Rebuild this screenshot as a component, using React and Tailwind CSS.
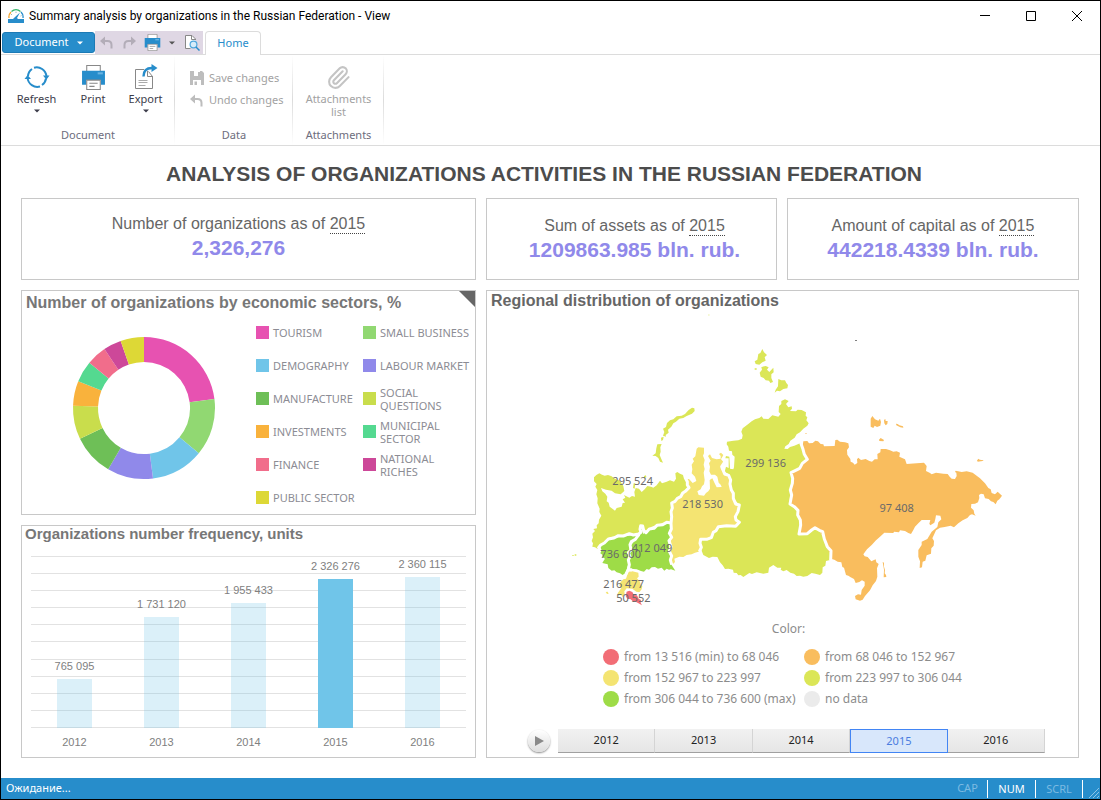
import { useState } from 'react'
import { Paperclip } from 'lucide-react'

const YEARS = ['2012', '2013', '2014', '2015', '2016']

const SECTORS = [
  { name: 'TOURISM', color: '#e752b1', from: 0, to: 82.7 },
  { name: 'SMALL BUSINESS', color: '#91d872', from: 82.7, to: 129.5 },
  { name: 'DEMOGRAPHY', color: '#70c5e9', from: 129.5, to: 172.7 },
  { name: 'LABOUR MARKET', color: '#9089ea', from: 172.7, to: 210.3 },
  { name: 'MANUFACTURE', color: '#6ebf57', from: 210.3, to: 244.4 },
  { name: 'SOCIAL\nQUESTIONS', color: '#c9dd4c', from: 244.4, to: 271.9 },
  { name: 'INVESTMENTS', color: '#f9b23c', from: 271.9, to: 292.2 },
  { name: 'MUNICIPAL\nSECTOR', color: '#54d990', from: 292.2, to: 309.7 },
  { name: 'FINANCE', color: '#f16d8b', from: 309.7, to: 326.1 },
  { name: 'NATIONAL\nRICHES', color: '#cd4899', from: 326.1, to: 340.8 },
  { name: 'PUBLIC SECTOR', color: '#ddd836', from: 340.8, to: 360 },
]

const BARS = [
  { year: '2012', label: '765 095', height: 49 },
  { year: '2013', label: '1 731 120', height: 111 },
  { year: '2014', label: '1 955 433', height: 125 },
  { year: '2015', label: '2 326 276', height: 149 },
  { year: '2016', label: '2 360 115', height: 151 },
]

const RANGES = [
  { label: 'from 13 516 (min) to 68 046', color: '#f26d76' },
  { label: 'from 68 046 to 152 967', color: '#f9bd5e' },
  { label: 'from 152 967 to 223 997', color: '#f4e472' },
  { label: 'from 223 997 to 306 044', color: '#dbe657' },
  { label: 'from 306 044 to 736 600 (max)', color: '#9edc47' },
  { label: 'no data', color: '#ebebeb' },
]

const MAP_LABELS = [
  { text: '295 524', x: 188, y: 466 },
  { text: '218 530', x: 398, y: 535 },
  { text: '299 136', x: 587, y: 412 },
  { text: '97 408', x: 980, y: 546 },
  { text: '736 600', x: 152, y: 684 },
  { text: '412 049', x: 246, y: 667 },
  { text: '216 477', x: 161, y: 774 },
  { text: '50 552', x: 190, y: 817 },
]

function point(angle, r) {
  const a = (angle * Math.PI) / 180
  return `${(72 + r * Math.sin(a)).toFixed(2)} ${(72 - r * Math.cos(a)).toFixed(2)}`
}

function slicePath({ from, to }) {
  return `M${point(from, 71)}A71 71 0 0 1 ${point(to, 71)}L${point(to, 46)}A46 46 0 0 0 ${point(from, 46)}Z`
}

function Logo() {
  return (
    <svg width="16" height="14" viewBox="0 0 16 14" fill="none" aria-hidden="true">
      <path d="M1 9a7 7 0 0 1 2-6" stroke="#f2a531" strokeWidth="1.3" />
      <path d="M3.5 2.4a7 7 0 0 1 9 0" stroke="#35b56a" strokeWidth="1.3" />
      <path d="M13 3a7 7 0 0 1 2 6" stroke="#278dcb" strokeWidth="1.3" />
      <path d="M0 10h5l1.5-1.5L12 3.5 9 9l1 1h6v4H0z" fill="#278dcb" />
      <path d="M4 6l-1-1M8 4V2.6M12.5 7l1-.5" stroke="#8aa" strokeWidth=".8" />
    </svg>
  )
}

function PrinterIcon({ size }) {
  return (
    <svg width={size} height={size} viewBox="0 0 24 24" fill="none" aria-hidden="true">
      <path d="M5.5 6V.5h13V6" fill="#fff" stroke="#888" />
      <path d="M1 5.5h22V19h-4v-4.5H5V19H1z" fill="#278dcb" />
      <path d="M16 7h5v2h-5z" fill="#68b3e2" />
      <path d="M5.5 14.5h13v9h-13z" fill="#fff" stroke="#888" />
      <path d="M8 17.5h8M8 20.5h5" stroke="#888" />
    </svg>
  )
}

function RefreshIcon() {
  return (
    <svg width="26" height="24" viewBox="0 0 26 24" fill="none" aria-hidden="true">
      <g stroke="#278dcb" strokeWidth="2">
        <path d="M4 11A9.500 9.500 0 0 1 8 4" />
        <path d="M10 2.700A9.800 9.800 0 0 1 22.400 11" />
        <path d="M22 13.500A9.500 9.500 0 0 1 18 20" />
        <path d="M16 21.500A9.800 9.800 0 0 1 3.600 13" />
      </g>
      <path d="M.5 14h6.500L3.600 10zM19 10.500h6.500L22.400 14.800z" fill="#278dcb" />
    </svg>
  )
}

function ExportIcon() {
  return (
    <svg width="24" height="26" viewBox="0 0 24 26" fill="none" aria-hidden="true">
      <path d="M10 5.500H1.500v19h17V12.500l-4-5" fill="#fff" stroke="#888" />
      <path d="M13.500 7v5.500h5.500" stroke="#888" />
      <path d="M4.500 16.500h9M4.500 18.500h9M4.500 21.500h7" stroke="#aaa" />
      <path d="M9.500 12.500C9.500 6.500 12 4 18 4" stroke="#278dcb" strokeWidth="2.4" />
      <path d="M17.500 0v8l6-4z" fill="#278dcb" />
    </svg>
  )
}

function UndoIcon({ flip, color }) {
  return (
    <svg width="13" height="13" viewBox="0 0 13 13" fill="none" className={flip ? 'scale-x-[-1]' : ''} aria-hidden="true">
      <path d="M0 5l5-4.500v9z" fill={color} />
      <path d="M4 5h3.500c3 0 4 2 4 4v3.500" stroke={color} strokeWidth="2" />
    </svg>
  )
}

function SaveIcon() {
  return (
    <svg width="14" height="14" viewBox="0 0 14 14" aria-hidden="true">
      <path d="M0 0h12l2 2v12H0z" fill="#bdbdbd" />
      <path d="M4 0h6v5H4zM3 9h8v5H3z" fill="#fff" />
      <path d="M8 1h2v4H8zM4.500 10.500h2.500V14H4.500z" fill="#bdbdbd" />
    </svg>
  )
}

function PreviewIcon() {
  return (
    <svg width="15" height="16" viewBox="0 0 15 16" fill="none" aria-hidden="true">
      <path d="M10.500 5V4L7 .5H.5v13h5" fill="#fff" stroke="#888" />
      <path d="M6.500.5v4h4" stroke="#888" />
      <circle cx="8.500" cy="9.500" r="3.400" fill="#d6ecf9" stroke="#4fa6dc" strokeWidth="1.2" />
      <path d="M11 12l3.500 3.500" stroke="#278dcb" strokeWidth="1.5" />
    </svg>
  )
}

function Caret({ className }) {
  return (
    <svg width="6" height="4" viewBox="0 0 6 4" className={className} aria-hidden="true">
      <path d="M0 .5h6l-3 3z" fill="currentColor" />
    </svg>
  )
}

function TitleBar() {
  return (
    <header className="flex h-[30px] items-center bg-white">
      <div className="flex flex-1 items-center gap-[5px] pl-[7px]">
        <Logo />
        <span className="font-['Roboto',sans-serif] text-xs text-black">
          Summary analysis by organizations in the Russian Federation - View
        </span>
      </div>
      <button aria-label="Minimize" className="flex h-full w-[46px] items-center justify-center">
        <svg width="10" height="10" viewBox="0 0 10 10" stroke="#000"><path d="M0 4.500h10" /></svg>
      </button>
      <button aria-label="Maximize" className="flex h-full w-[46px] items-center justify-center">
        <svg width="10" height="10" viewBox="0 0 10 10" stroke="#000" fill="none"><path d="M.5.5h9v9h-9z" /></svg>
      </button>
      <button aria-label="Close" className="flex h-full w-[46px] items-center justify-center">
        <svg width="10" height="10" viewBox="0 0 10 10" stroke="#000"><path d="M0 0l10 10M10 0L0 10" /></svg>
      </button>
    </header>
  )
}

function TabRow() {
  return (
    <div className="flex h-6 border-b border-[#dcdcdc] pl-px">
      <button className="my-px flex w-[93px] items-center justify-center gap-2 rounded-[3px] border border-[#1c7ab5] bg-[#278dcb] text-white">
        Document
        <Caret />
      </button>
      <div className="flex w-[108px] items-center bg-[#dfd7e4] pl-[5px]">
        <button aria-label="Undo"><UndoIcon color="#b3adb8" /></button>
        <button aria-label="Redo" className="ml-2.5"><UndoIcon flip color="#b3adb8" /></button>
        <button aria-label="Print" className="ml-2"><PrinterIcon size={17} /></button>
        <button aria-label="Print options" className="ml-2 text-[#555]"><Caret /></button>
        <button aria-label="Preview" className="ml-2.5"><PreviewIcon /></button>
      </div>
      <button className="-mb-px ml-0.5 w-14 rounded-t-sm border border-b-0 border-[#dcdcdc] bg-white text-[#278dcb]">
        Home
      </button>
    </div>
  )
}

function Group({ title, children }) {
  return (
    <section className="relative flex flex-col pt-2 pb-[3px]">
      <div className="flex flex-1">{children}</div>
      <h2 className="text-center text-[#6d6d7d]">{title}</h2>
      <div className="absolute top-0 right-0 h-full w-px bg-linear-to-b from-transparent via-[#dcdcdc] to-transparent" />
    </section>
  )
}

function BigButton({ icon, label, caret, className }) {
  return (
    <button className={`flex flex-col items-center ${className}`}>
      <span className="flex h-7 items-center">{icon}</span>
      <span className="leading-4">{label}</span>
      {caret && <Caret className="mt-[2px]" />}
    </button>
  )
}

function Ribbon() {
  return (
    <nav className="flex h-[91px] border-b border-[#dcdcdc] leading-[14px] text-[#3c3c4a]">
      <Group title="Document">
        <BigButton icon={<RefreshIcon />} label="Refresh" caret className="w-[71px]" />
        <BigButton icon={<PrinterIcon size={25} />} label="Print" className="w-[42px]" />
        <BigButton icon={<ExportIcon />} label="Export" caret className="w-[61px] pl-0.5" />
      </Group>
      <Group title="Data">
        <div className="flex w-[118px] flex-col gap-2 pt-2 pl-[15px] text-[#a2a2a2]">
          <button disabled className="flex items-center gap-[5px]"><SaveIcon />Save changes</button>
          <button disabled className="flex items-center gap-1.5"><UndoIcon color="#bdbdbd" />Undo changes</button>
        </div>
      </Group>
      <Group title="Attachments">
        <button disabled className="flex w-[91px] flex-col items-center text-[#a2a2a2]">
          <span className="flex h-[29px] items-center">
            <Paperclip size={25} strokeWidth={2} color="#c4c4c4" aria-hidden="true" />
          </span>
          <span className="w-[70px] leading-[13px]">Attachments list</span>
        </button>
      </Group>
    </nav>
  )
}

function Panel({ className = '', children }) {
  return <section className={`border border-[#c8c8c8] bg-white ${className}`}>{children}</section>
}

function Kpi({ label, value, className }) {
  return (
    <Panel className={`text-center ${className}`}>
      <p className="text-base leading-5 text-[#666]">
        {label} <button className="border-b border-dotted border-[#444] leading-[18px]">2015</button>
      </p>
      <p className="text-[21px] leading-7 font-bold text-[#9089ea]">{value}</p>
    </Panel>
  )
}

function SectorPanel() {
  return (
    <Panel className="relative flex flex-col">
      <h2 className="px-1 text-base leading-6 font-bold text-[#777]">
        Number of organizations by economic sectors, %
      </h2>
      <div className="absolute top-0 right-0 size-4 bg-[#666] [clip-path:polygon(0_0,100%_0,100%_100%)]" />
      <div className="flex flex-1">
        <div className="flex w-[234px] items-start pt-[21px] pl-[50px]">
          <svg width="144" height="144" viewBox="0 0 144 144" role="img" aria-label="Sector shares">
            {SECTORS.map((s) => (
              <path key={s.name} d={slicePath(s)} fill={s.color} />
            ))}
          </svg>
        </div>
        <ul className="grid flex-1 auto-rows-[33px] grid-cols-[107px_1fr] pt-px font-['Noto_Sans',sans-serif] text-[11px] leading-[13px] text-[#8c8c94]">
          {SECTORS.map((s) => (
            <li key={s.name} className="flex items-center gap-1 whitespace-pre">
              <span className="size-[13px] shrink-0" style={{ background: s.color }} />
              {s.name}
            </li>
          ))}
        </ul>
      </div>
    </Panel>
  )
}

function FrequencyPanel() {
  return (
    <Panel className="flex flex-col">
      <h2 className="px-[3px] text-[15px] leading-4 font-bold text-[#777]">Organizations number frequency, units</h2>
      <div className="mx-[9px] mt-[14px] grid text-[11px] text-[#808080]">
        <div className="flex flex-col justify-between [grid-area:1/1]">
          {Array.from({ length: 11 }, (_, i) => (
            <div key={i} className="h-px bg-[#e2e2e2]" />
          ))}
        </div>
        <div className="grid h-[172px] grid-cols-5 items-end [grid-area:1/1]">
          {BARS.map((b) => (
            <div key={b.year} className="flex flex-col items-center">
              <span className="mb-1.5 leading-[14px]">{b.label}</span>
              <div
                className={b.year === '2015' ? 'w-[35px] bg-[#70c5e9]' : 'w-[35px] bg-[#70c5e9]/25'}
                style={{ height: b.height }}
              />
            </div>
          ))}
        </div>
      </div>
      <div className="mx-[9px] mt-1.5 grid grid-cols-5 text-center text-[11px] leading-4 text-[#808080]">
        {YEARS.map((y) => (
          <span key={y}>{y}</span>
        ))}
      </div>
    </Panel>
  )
}

function RegionMap() {
  return (
    <svg viewBox="-249 -57 1773 900" className="h-[300px] w-full" role="img" aria-label="Organizations by federal district">
      {/* north-west */}
      <g fill="#dbe657">
        <path d="M72 442L79 435 88 430 96 434 104 437 114 435 125 439 132 445 150 452 160 468 163 483 152 493 135 490 125 482 108 479 93 474 97 484 106 491 112 500 110 514 116 518 119 530 135 542 140 534 155 530 158 519 165 518 158 508 166 503 162 495 178 503 186 498 195 500 193 486 197 474 207 476 215 486 224 478 232 468 243 470 250 473 260 466 270 452 276 460 290 455 300 451 312 455 318 446 316 430 322 426 330 431 339 435 341 443 350 447 357 475 333 500 305 520 303 578 275 580 245 590 222 608 215 585 207 612 150 615 120 622 92 645 82 656 75 652 67 650 69 640 65 633 69 622 67 611 75 603 70 597 81 595 80 586 86 580 87 569 94 557 88 546 89 536 82 520 83 505 79 493 82 480 76 470 80 462 72 454Z" />
        <path d="M356 240L366 233 373 235 374 243 366 251 350 258 340 264 328 266 318 275 310 280 304 290 294 299 296 308 287 315 288 320 279 317 283 306 279 296 288 291 291 279 300 271 310 268 320 259 335 257 345 252ZM273 323L281 320 279 330 274 333ZM262 343L275 342 271 352 272 365 269 375 274 387 279 398 270 395 265 384 257 378 247 377 257 370 259 355Z" />
        <path d="M222 438l6-2 1 6-7 2zM191 460l5 0-2 16-5-2zM7 675h4v3h-4zM14 673h5v4h-5zM414-46h5v2h-5z" />
      </g>
      {/* centre and volga */}
      <g fill="#9edc47">
        <path d="M90 648L110 632 130 626 150 620 178 617 205 614 190 630 180 645 178 665 176 700 167 728 158 735 150 730 140 727 133 721 125 722 115 714 113 703 97 699 101 692 105 686 98 682 97 674 91 670 95 661Z" />
        <path d="M180 650L195 630 210 617 213 590 220 612 245 595 275 584 302 579 302 600 296 610 303 622 296 640 302 665 299 690 303 702 316 722 303 718 297 719 290 716 283 722 275 713 264 716 255 711 245 712 237 719 230 717 222 725 213 723 200 718 180 716 178 700 176 680 182 665Z" />
      </g>
      {/* ural and south */}
      <g fill="#f4e472">
        <path d="M380 356L385 352 402 353 402 370 399 377 404 390 401 404 404 417 401 428 404 450 402 463 396 469 392 478 382 484 386 495 402 497 408 489 415 484 420 476 419 450 427 445 434 460 440 472 455 471 452 464 446 458 442 440 435 434 423 434 418 424 420 410 417 400 422 392 414 378 420 373 426 384 440 388 452 386 452 378 447 372 453 368 460 375 455 385 464 400 452 415 462 432 475 435 482 450 482 480 490 505 495 520 505 525 505 550 495 560 505 580 490 588 445 588 435 605 420 622 390 630 392 655 386 665 375 668 365 673 350 675 340 681 328 680 313 686 315 696 310 701 303 698 300 660 303 630 300 600 305 578 305 520 333 500 353 480 350 460 348 448 357 447 368 459 379 453 375 440 365 430 367 418 365 404 372 394 368 386 376 379Z" />
        <path d="M175 725L187 724 205 728 206 740 201 745 210 755 212 764 217 768 215 778 208 787 199 785 187 776 170 775 163 784 164 793 158 801 153 794 140 797 144 788 154 774 148 767 152 755 160 748 168 746ZM107 786l6-1 3 6-5 1z" />
      </g>
      <path d="M170 785L178 782 187 786 192 795 201 796 206 806 213 810 212 818 216 826 204 819 197 815 191 816 182 808 172 806 167 798Z" fill="#f26d76" />
      {/* siberia */}
      <g transform="translate(450 0)" fill="#dbe657">
        <path d="M184 213L195 208 206 213 198 222 205 232 215 229 216 236 210 243 228 244 233 239 245 240 258 247 257 257 262 262 259 271 266 280 262 287 250 296 240 307 230 313 224 323 211 332 206 342 196 349 193 356 203 357 210 351 223 347 240 340 247 355 250 370 260 388 245 405 240 415 212 430 216 445 212 480 208 522 230 540 238 560 240 612 262 610 285 593 300 605 310 625 318 650 330 668 330 690 318 693 316 707 308 712 307 728 300 735 286 731 275 729 262 738 250 740 240 737 230 738 222 731 211 728 200 720 190 724 182 719 184 713 172 713 160 705 147 713 145 728 130 731 110 727 96 732 88 729 70 741 62 735 55 736 50 729 41 728 39 719 25 716 15 717 8 706 0 697 -8 681 -22 680 -33 684 -50 675 -58 655 -60 630 -30 622 -15 605 -5 590 40 590 58 580 48 560 58 540 55 522 45 510 32 482 32 450 25 432 14 425 18 410 26 414 26 385 16 385 18 378 28 380 30 416 40 418 42 412 44 380 37 374 36 364 27 362 25 350 20 343 21 335 40 332 55 331 66 326 68 316 64 305 68 295 82 284 95 274 105 268 118 264 125 259 130 266 145 267 157 256 175 260 182 252 176 246 177 228 184 222Z" />
        <path d="M127 57L132 67 141 75 134 82 137 92 127 97 118 104 107 102 104 94 112 89 115 72 121 69ZM119 128L126 119 124 111 137 108 146 112 141 119 148 126 160 113 161 127 154 133 154 144 159 156 151 159 147 152 137 151 131 144 122 140ZM175 147L184 151 195 151 199 159 204 165 202 175 190 177 180 184 171 182 164 188 167 179 174 169ZM104 115h6v4h-6z" />
      </g>
      {/* far east */}
      <g transform="translate(840 210)" fill="#f9bd5e">
        <path d="M-140 124L-128 123 -123 130 -112 129 -104 122 -96 124 -88 132 -80 133 -78 139 -46 138 -44 120 -38 119 -30 125 -15 127 -5 130 -3 142 -9 150 -8 164 1 177 2 185 9 188 14 194 22 189 21 178 25 173 33 180 47 177 58 183 66 185 74 178 83 178 82 162 91 157 92 147 108 147 120 151 130 155 140 154 150 158 148 170 165 178 170 192 200 190 222 188 230 198 228 213 240 219 245 223 258 218 280 221 293 222 299 230 305 236 315 237 320 228 319 218 315 216 317 212 335 216 350 214 368 218 390 235 405 250 415 264 422 268 425 279 435 283 443 275 456 287 448 298 442 302 437 313 430 306 423 304 416 297 405 295 401 283 393 281 387 285 388 294 384 307 375 311 364 312 363 323 371 331 373 341 377 347 366 343 360 345 352 354 338 361 325 370 312 382 302 377 284 381 270 383 258 391 253 402 247 415 252 423 251 437 244 445 243 461 230 466 226 482 218 485 216 502 209 504 210 484 205 470 205 450 215 435 215 425 232 417 245 395 262 381 265 367 274 358 271 347 258 346 256 357 253 368 241 376 238 371 241 360 215 360 205 370 195 380 190 390 183 402 175 399 165 393 150 391 147 397 132 395 130 399 103 398 90 410 78 421 65 435 51 448 40 463 44 469 53 471 64 484 77 478 79 487 86 492 81 505 82 530 78 543 68 556 60 571 45 588 38 599 30 602 17 598 15 588 24 583 33 584 35 570 44 557 44 545 36 541 28 546 17 549 12 537 2 532 -5 527 -12 525 -18 503 -23 501 -26 487 -37 485 -47 479 -58 476 -60 460 -72 440 -80 415 -90 395 -105 383 -128 400 -150 402 -152 350 -160 330 -182 312 -178 270 -174 235 -178 220 -150 205 -145 195 -130 178 -140 160 -143 145Z" />
        <path d="M62 56L67 48 75 58 85 62 90 56 93 66 91 77 81 81 74 77 70 84 62 80ZM102 60l4-3 1 6 6 0-1 9-5 4-4-6zM138 71l5 1 5 4 11 3 1 4-9-1-12-6zM87 119l5-5 10 6-2 4-12-1zM381 181l5-5 3 3 12 2-3 2-15 2zM98 486l4 2 0 12 3 10-1 10 4 5 1 6-8 1 1-23zM-134 99l4 0 0 2-4 0z" />
      </g>
      {/* district borders */}
      <g fill="none" stroke="#fff" strokeWidth="9" strokeLinejoin="round">
        <path d="M84 655L92 645 103 639 115 627 132 624 145 617 160 618 178 611 190 615 206 612 213 607 210 598 212 587 218 588 221 601 228 608 238 597 252 595 261 586 278 584 290 577 303 579" />
        <path d="M206 614L196 628 184 635 180 644 183 660 175 668 180 680 175 690 178 704 175 718 168 732M176 718L186 720" />
        <path d="M345 442L352 455 352 465 357 473 346 484 338 489 332 500 322 505 315 514 305 519 307 534 303 545 305 560 303 580 304 597 298 610 305 622 297 632 303 650 298 664 305 678 301 690 305 704" />
        <path d="M456 384L465 395 455 410 464 432 476 436 482 450 480 462 484 480 490 490 490 505 497 522 508 525 504 545 496 560 498 570 508 577 497 589 470 587 445 590 438 602 430 607 424 623 410 628 392 628 390 640 394 652 388 665" />
        <path d="M692 338L699 358 703 373 712 388 697 400 689 415 677 421 663 428 668 445 667 460 661 480 665 495 660 522 673 530 684 541 683 555 691 570 692 585 687 612 712 611 725 600 735 593 748 601 758 605 763 627 772 650 783 662 782 690" />
      </g>
      <path d="M855 30h6v2h-6z" fill="#555" />
      <g fill="#6a6a6a" fontSize="33" textAnchor="middle" className="font-['Noto_Sans',sans-serif]">
        {MAP_LABELS.map((l) => (
          <text key={l.text} x={l.x} y={l.y}>{l.text}</text>
        ))}
      </g>
    </svg>
  )
}

function RegionPanel() {
  const [year, setYear] = useState('2015')

  return (
    <Panel className="col-span-2 row-span-2 flex flex-col font-['Noto_Sans',sans-serif] text-xs text-[#8c8c8c]">
      <h2 className="px-1 font-['Liberation_Sans',sans-serif] text-base leading-5 font-bold text-[#666]">
        Regional distribution of organizations
      </h2>
      <RegionMap />
      <p className="mt-2 pl-3 text-center leading-5">Color:</p>
      <ul className="mx-auto mt-[7px] grid auto-rows-[21px] grid-cols-[201px_160px] pl-0.5">
        {RANGES.map((r) => (
          <li key={r.label} className="flex items-center gap-[5px] whitespace-nowrap">
            <span className="size-4 rounded-full" style={{ background: r.color }} />
            {r.label}
          </li>
        ))}
      </ul>
      <div className="mt-auto mr-[33px] mb-1 ml-[41px] flex items-center gap-2">
        <button
          aria-label="Play"
          className="flex size-[22px] items-center justify-center rounded-full bg-linear-to-b from-white to-[#ddd] shadow-[0_1px_2px_#888]"
        >
          <svg width="9" height="10" viewBox="0 0 9 10" aria-hidden="true"><path d="M0 0l9 5-9 5z" fill="#8a8a8a" /></svg>
        </button>
        <div className="grid h-6 flex-1 grid-cols-5 text-[11px]">
          {YEARS.map((y) => (
            <button
              key={y}
              onClick={() => setYear(y)}
              className={
                y === year
                  ? 'border border-[#4285f4] bg-[#d8e7fb] text-[#4a7de0]'
                  : 'border-r border-b border-r-[#d4d4d4] border-b-[#a0a0a0] bg-linear-to-b from-[#f1f1f1] to-[#e6e6e6] text-[#222]'
              }
            >
              {y}
            </button>
          ))}
        </div>
      </div>
    </Panel>
  )
}

function StatusBar() {
  return (
    <footer className="flex h-[21px] items-center bg-[#278dcb] text-white">
      <span className="flex-1 pl-[5px]">Ожидание...</span>
      <span className="w-[39px] text-center text-[#7cbbe2]">CAP</span>
      <span className="w-[49px] border-x border-white text-center leading-[18px]">NUM</span>
      <span className="w-[47px] border-r border-white text-center leading-[18px] text-[#7cbbe2]">SCRL</span>
      <svg width="17" height="21" viewBox="0 0 17 21" stroke="#8cc4e8" aria-hidden="true">
        <path d="M6 20L16 10M10 20l6-6M14 20l2-2" />
      </svg>
    </footer>
  )
}

export default function App() {
  return (
    <div className="flex min-h-screen flex-col border border-black bg-white font-['Noto_Sans',sans-serif] text-[11px]">
      <TitleBar />
      <TabRow />
      <Ribbon />
      <main className="flex flex-1 flex-col pt-4 pr-[21px] pb-5 pl-5 font-['Liberation_Sans',sans-serif]">
        <h1 className="mb-3 pr-3 text-center text-[21px] leading-6 font-bold text-[#4c4c4c]">
          ANALYSIS OF ORGANIZATIONS ACTIVITIES IN THE RUSSIAN FEDERATION
        </h1>
        <div className="grid flex-1 grid-cols-[455fr_291fr_292fr] grid-rows-[82fr_225fr_233fr] gap-2.5">
          <Kpi label="Number of organizations as of" value="2,326,276" className="pt-[15px] pr-5" />
          <Kpi label="Sum of assets as of" value="1209863.985 bln. rub." className="pt-[17px] pl-1.5" />
          <Kpi label="Amount of capital as of" value="442218.4339 bln. rub." className="pt-[17px]" />
          <SectorPanel />
          <RegionPanel />
          <FrequencyPanel />
        </div>
      </main>
      <StatusBar />
    </div>
  )
}
